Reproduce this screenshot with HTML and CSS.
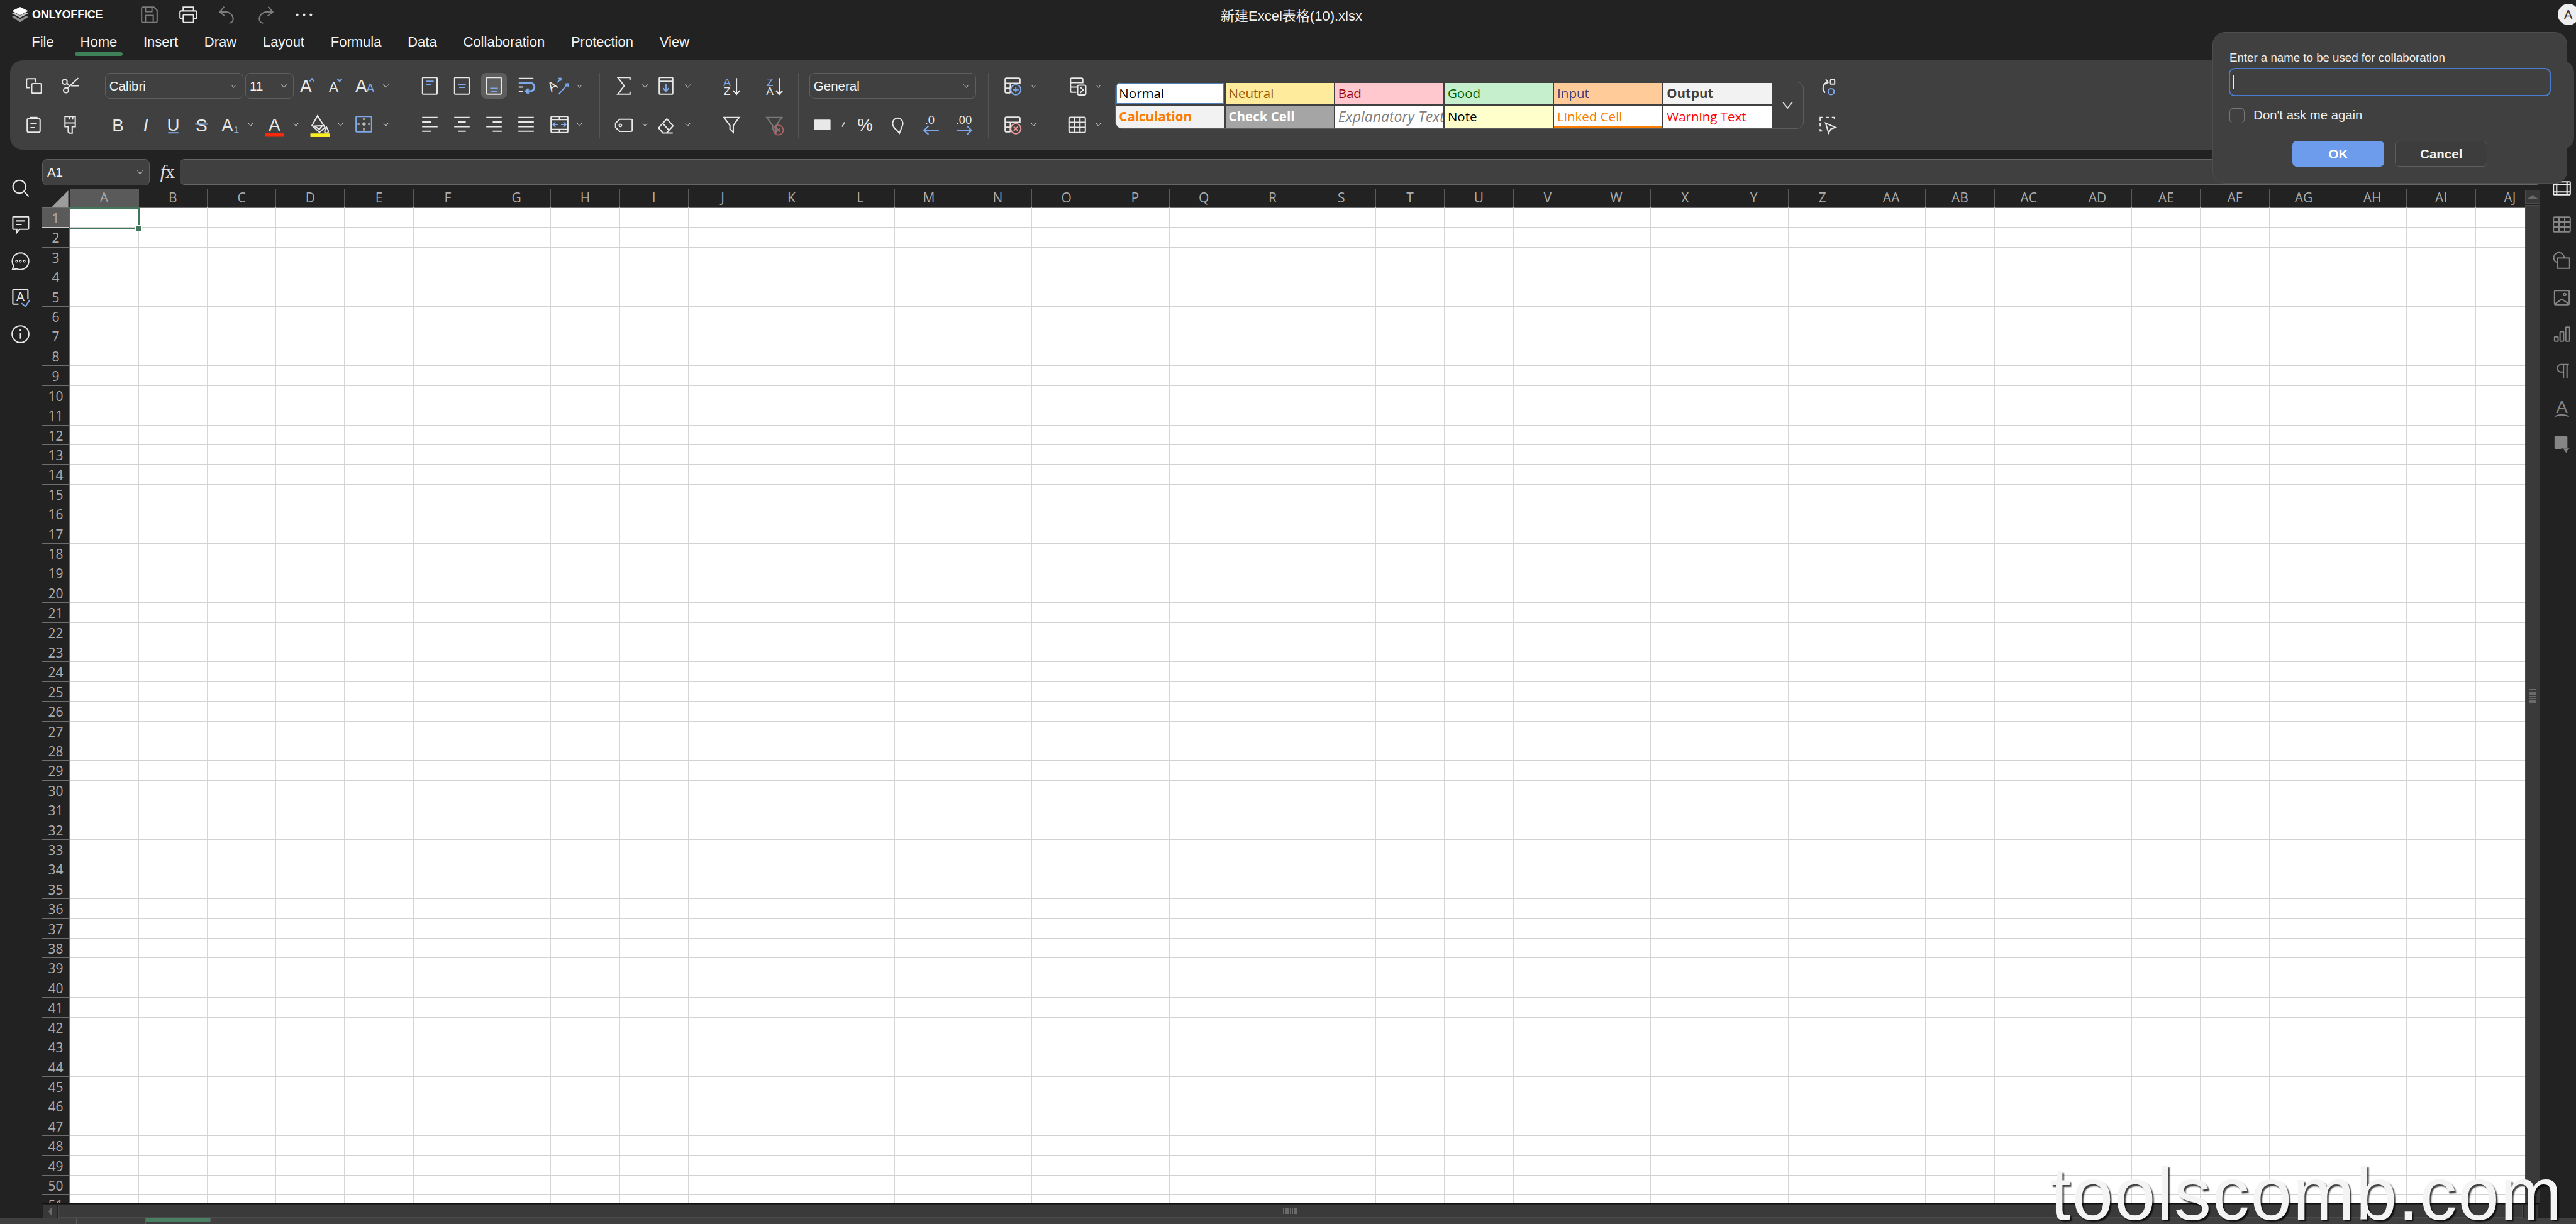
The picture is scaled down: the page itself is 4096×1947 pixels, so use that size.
FILE: index.html
```html
<!DOCTYPE html>
<html lang="en">
<head>
  <meta charset="UTF-8">
  <meta name="viewport" content="width=device-width, initial-scale=1.0">
  <title>新建Excel表格(10).xlsx</title>
  <link rel="stylesheet" href="styles.css">
</head>
<body>
  <!-- icon sprite -->
  <svg class="sprite">
    <symbol id="chev" viewBox="0 0 9 6"><path d="M.5.5L4.5 5.3 8.500.5"/></symbol>
    <symbol id="logo" viewBox="0 0 38 36">
      <path class="logo-a" d="M19 0L38 9.500 19 19 0 9.500z"/>
      <path class="logo-b" d="M0 15l5-2.300L19 20l14-7.300L38 15 19 25z"/>
      <path class="logo-c" d="M0 23l5-2.300L19 28l14-7.300L38 23 19 36z"/>
    </symbol>
    <symbol id="save" viewBox="0 0 20 20"><path d="M5 4h8.500L16 6.500V15a1 1 0 0 1-1 1H5a1 1 0 0 1-1-1V5a1 1 0 0 1 1-1zM7 4v3.500h5V4M7 16v-5.500h6V16"/></symbol>
    <symbol id="print" viewBox="0 0 20 20"><path d="M6 7V4h8v3M6 13H4.500a1 1 0 0 1-1-1V8a1 1 0 0 1 1-1h11a1 1 0 0 1 1 1v4a1 1 0 0 1-1 1H14"/><rect x="6" y="10" width="8" height="6" rx=".6"/></symbol>
    <symbol id="undo" viewBox="0 0 20 20"><path d="M8 3.700L4.500 7.800 8.500 11M4.500 7.800h5a5.800 5.800 0 0 1 5.500 5.400c0 2-1.400 3.200-3 3.300"/></symbol>
    <symbol id="redo" viewBox="0 0 20 20"><path d="M12 3.700l3.500 4.100-4 3.200M15.500 7.800h-5A5.800 5.800 0 0 0 5 13.200c0 2 1.400 3.200 3 3.300"/></symbol>
    <symbol id="dots" viewBox="0 0 20 20"><g class="solid"><circle cx="4.700" cy="10" r="1"/><circle cx="10" cy="10" r="1"/><circle cx="15.300" cy="10" r="1"/></g></symbol>

    <symbol id="copy" viewBox="0 0 20 20"><path d="M11.500 7.500V4.500H5.500a1 1 0 0 0-1 1v6H7"/><rect x="8.500" y="8.300" width="7.500" height="7.500" rx="1"/></symbol>
    <symbol id="cut" viewBox="0 0 20 20"><circle cx="5.800" cy="7" r="1.900"/><circle cx="6.800" cy="13.500" r="1.900"/><path d="M16.300 4L7.800 12M7.500 8.200l2.500 2.100M10.800 10h6"/></symbol>
    <symbol id="paste" viewBox="0 0 20 20"><rect x="5" y="5.300" width="10" height="10.500" rx="1"/><path d="M7.500 5.300V4.300h5v1M7.500 9h5M7.500 12.200h3.500"/></symbol>
    <symbol id="painter" viewBox="0 0 20 20"><path d="M6 3.500h8v8h-2.400v5H9.500l-1-1v-4H6zM6 8.500h8M9.300 3.500v2.500M12 3.500v2.500"/></symbol>
    <symbol id="fgrow" viewBox="0 0 20 20"><text class="t" x="8" y="15" font-size="14">A</text><path class="b" d="M11 6.500l1.700-2 1.700 2"/></symbol>
    <symbol id="fshrink" viewBox="0 0 20 20"><text class="t" x="8" y="14.500" font-size="11">A</text><path class="b" d="M11 4.500l1.700 2 1.700-2"/></symbol>
    <symbol id="fcase" viewBox="0 0 20 20"><text class="t" x="7.500" y="15" font-size="14">A</text><text class="t tb" x="14.500" y="15" font-size="9.500">A</text></symbol>
    <symbol id="bold" viewBox="0 0 20 20"><text class="t" x="10" y="15" font-size="13.500">B</text></symbol>
    <symbol id="italic" viewBox="0 0 20 20"><text class="t ti" x="10" y="15" font-size="13.500">I</text></symbol>
    <symbol id="under" viewBox="0 0 20 20"><text class="t" x="10" y="14.500" font-size="13.500">U</text><path class="b" d="M6 16.200h8"/></symbol>
    <symbol id="strike" viewBox="0 0 20 20"><text class="t" x="10" y="15" font-size="13.500">S</text><path class="b" d="M5 9.500h10"/></symbol>
    <symbol id="sub" viewBox="0 0 20 20"><text class="t" x="8.500" y="15" font-size="13.500">A</text><text class="t tb" x="15.500" y="16" font-size="7.500">1</text></symbol>
    <symbol id="fcolor" viewBox="0 0 20 20"><text class="t" x="10" y="14.800" font-size="13.500">A</text><rect class="bar-red" x="2.500" y="16.500" width="15" height="2.800"/></symbol>
    <symbol id="fill" viewBox="0 0 20 20"><path d="M8.200 3l5.800 9-4.300 3.800L4 10.500zM6 11l6-.3-2.500 2.800zM15.300 12c.7 1.300 1.300 2.100 1.300 3a1.400 1.400 0 0 1-2.800 0c0-.9.700-1.700 1.500-3z"/><rect class="bar-yellow" x="2.700" y="16.700" width="15" height="2.800"/></symbol>
    <symbol id="borders" viewBox="0 0 20 20"><rect class="b" x="3.500" y="3.500" width="12" height="12" rx=".8"/><path d="M9.500 4.500v1.800M9.500 8v3M9.500 12.700v1.800M4.500 9.500h1.800M8 9.500h3M12.700 9.500h1.800"/></symbol>

    <symbol id="a-top" viewBox="0 0 20 20"><rect x="4.300" y="3.500" width="11.300" height="13" rx=".8"/><path class="b" d="M7 6.500h6M7 9h4"/></symbol>
    <symbol id="a-mid" viewBox="0 0 20 20"><rect x="4.300" y="3.500" width="11.300" height="13" rx=".8"/><path class="b" d="M7 8.800h6M7.800 11.200h4.400"/></symbol>
    <symbol id="a-bot" viewBox="0 0 20 20"><rect x="4.300" y="3.500" width="11.300" height="13" rx=".8"/><path class="b" d="M7 12h6M7.800 14.400h4.400"/></symbol>
    <symbol id="wrap" viewBox="0 0 20 20"><path d="M4.300 4.300h11.400M4.300 11h3M4.300 14.500h3"/><path class="b wb" d="M4.300 7.800h9a3.200 3.200 0 0 1 0 6.400h-3M12 12.200l-2.300 2 2.300 2"/></symbol>
    <symbol id="orient" viewBox="0 0 20 20"><text class="t" transform="translate(7 13) rotate(-35)" font-size="10">A</text><path class="b" d="M9 7.500L11.500 4.200M9.700 4.300l1.800-.1.300 1.800M17 8.500L10 16.500M14.800 8.700l2.200-.2.300 2.200"/></symbol>
    <symbol id="l-left" viewBox="0 0 20 20"><path d="M4 4.300h12M4 7.800h7M4 11.400h12M4 15h7"/></symbol>
    <symbol id="l-center" viewBox="0 0 20 20"><path d="M4 4.300h12M7 7.800h6M4 11.400h12M7 15h6"/></symbol>
    <symbol id="l-right" viewBox="0 0 20 20"><path d="M4 4.300h12M9 7.800h7M4 11.400h12M9 15h7"/></symbol>
    <symbol id="l-just" viewBox="0 0 20 20"><path d="M4 4.300h12M4 7.800h12M4 11.400h12M4 15h12"/></symbol>
    <symbol id="merge" viewBox="0 0 20 20"><rect x="4" y="3.500" width="13" height="12.500" rx=".7"/><path d="M4 6h13M4 13.500h13M10.500 3.500V6M10.500 13.500V16"/><path class="b" d="M9.300 9.800H5.500M7.500 8L5.500 9.800l2 1.800M11.700 9.800h3.800M13.500 8l2 1.800-2 1.800"/></symbol>
    <symbol id="sum" viewBox="0 0 20 20"><path d="M15 5.500V3.500H5.500L10.500 10l-5 6.500H15v-2"/></symbol>
    <symbol id="filld" viewBox="0 0 20 20"><rect x="4.500" y="3.500" width="10.500" height="13" rx=".8"/><path d="M4.500 6.500H15"/><path class="b" d="M9.700 8.300v6M7.500 11.800l2.200 2.500 2.200-2.500"/></symbol>
    <symbol id="tag" viewBox="0 0 20 20"><path d="M7 5.700h9a.7.700 0 0 1 .7.700v8a.7.700 0 0 1-.7.700H7l-3.200-3v-3.400z"/><circle cx="7.500" cy="10.400" r=".9"/></symbol>
    <symbol id="eraser" viewBox="0 0 20 20"><path d="M10.400 5.400l4.800 5.400-5 5.500H7.300L4 12.400zM7.200 8.900l5 5.500M7 16.300h8"/></symbol>
    <symbol id="sortaz" viewBox="0 0 20 20"><text class="t tb" x="6.400" y="10" font-size="8.500">A</text><text class="t" x="6.400" y="17" font-size="8.500">Z</text><path d="M13.700 4v12.500M11.200 13.800l2.500 2.800 2.500-2.800"/></symbol>
    <symbol id="sortza" viewBox="0 0 20 20"><text class="t tb" x="6.400" y="10" font-size="8.500">Z</text><text class="t" x="6.400" y="17" font-size="8.500">A</text><path d="M13.700 4v12.500M11.200 13.800l2.500 2.800 2.500-2.800"/></symbol>
    <symbol id="filter" viewBox="0 0 20 20"><path d="M4 4.300h11.700l-4.500 6.200v5.300l-2.600-2.600v-2.700z"/></symbol>
    <symbol id="filterx" viewBox="0 0 20 20"><path class="dim" d="M4 4.300h11.700l-4.500 6.200v5.300l-2.600-2.600v-2.700z"/><circle class="pink" cx="13" cy="14" r="3.800"/><path class="pink" d="M11.700 12.600l2.600 2.800M14.300 12.600l-2.600 2.800"/></symbol>
    <symbol id="money" viewBox="0 0 20 20"><rect class="solid" x="3.700" y="6" width="12.700" height="8" rx=".6"/></symbol>
    <symbol id="percent" viewBox="0 0 20 20"><text class="t" x="10" y="14.700" font-size="13.500">%</text></symbol>
    <symbol id="comma" viewBox="0 0 20 20"><path d="M10.800 16.500l2-5c.4-.9.700-1.700.7-2.700a4 4 0 0 0-8 0c0 2.300 1.700 4.200 3.200 5.300z"/></symbol>
    <symbol id="decdn" viewBox="0 0 20 20"><text class="t" x="9" y="9.500" font-size="9">.0</text><path class="b" d="M16 14.300H4.500M8 11L4.500 14.300l3.500 3.200"/></symbol>
    <symbol id="decup" viewBox="0 0 20 20"><text class="t" x="9.500" y="9.500" font-size="9">.00</text><path class="b" d="M4 14.300h11.500M12 11l3.500 3.300-3.500 3.200"/></symbol>
    <symbol id="celladd" viewBox="0 0 20 20"><path d="M8.500 15.500h-3a1 1 0 0 1-1-1V5a1 1 0 0 1 1-1h9.500a1 1 0 0 1 1 1v3M4.500 8h12M4.500 11.800h4M8.500 8v7.500"/><circle class="b" cx="12.800" cy="13" r="3.900"/><path class="b" d="M12.800 10.800v4.400M10.600 13H15"/></symbol>
    <symbol id="celldel" viewBox="0 0 20 20"><path d="M8.500 15.500h-3a1 1 0 0 1-1-1V5a1 1 0 0 1 1-1h9.500a1 1 0 0 1 1 1v3M4.500 8h12M4.500 11.800h4M8.500 8v7.500"/><circle class="pink2" cx="12.800" cy="13" r="3.900"/><path class="pink2" d="M11.200 11.400l3.200 3.200M14.400 11.400l-3.200 3.200"/></symbol>
    <symbol id="cond" viewBox="0 0 20 20"><path d="M14.500 8V5a1 1 0 0 0-1-1H6a1 1 0 0 0-1 1v9a1 1 0 0 0 1 1h3.500M5 7.500h9.500M5 11h5"/><rect x="10.500" y="9.500" width="6.300" height="7.500" rx="1"/><path d="M12.500 11l2.300 2.200-2.300 2.300"/></symbol>
    <symbol id="ftable" viewBox="0 0 20 20"><rect x="3.800" y="4.200" width="12.700" height="11.800" rx="1"/><path d="M3.800 8h12.700M3.800 12h12.700M8 4.200V16M12.300 4.200V16"/></symbol>
    <symbol id="stylecopy" viewBox="0 0 20 20"><rect x="12.500" y="5.300" width="3.200" height="3.400" rx=".4"/><circle class="b" cx="13" cy="14.500" r="2.300"/><path d="M9.500 7.300a5 5 0 0 0-2.800 4.700c0 1.400.7 2.500 1.700 3.300M8.700 5l2 2.200-2.400 1.500"/></symbol>
    <symbol id="selcur" viewBox="0 0 20 20"><path d="M4.500 6.800V4.300h2.300M9 4.300h2.500M13.500 4.300h2v1.500M4.500 8.800v2.500M4.500 13.300v1.500h1.500"/><path d="M8.700 8.700l7.600 3.300-3.500 1.200-1.800 3.100z"/></symbol>

    <symbol id="search" viewBox="0 0 20 20"><circle cx="9.200" cy="9.300" r="5"/><path d="M12.800 13l3.600 3.800"/></symbol>
    <symbol id="comment" viewBox="0 0 20 20"><path d="M4.700 4.200h11a.6.6 0 0 1 .6.6v8.600a.6.6 0 0 1-.6.6H9.500l-2.300 2.500V14H4.700a.6.6 0 0 1-.6-.6V4.800a.6.6 0 0 1 .6-.6zM6.500 7.500h7M6.500 10.200h4.500"/></symbol>
    <symbol id="chat" viewBox="0 0 20 20"><path d="M10 3.500a6.500 6.500 0 1 1-2.800 12.400l-3.400.6.900-3A6.500 6.500 0 0 1 10 3.500z"/><circle class="thin" cx="7" cy="10" r=".7"/><circle class="thin" cx="10" cy="10" r=".7"/><circle class="thin" cx="13" cy="10" r=".7"/></symbol>
    <symbol id="spell" viewBox="0 0 20 20"><path d="M8.500 15H4.700a.6.600 0 0 1-.6-.6V4.300a.6.600 0 0 1 .6-.6h10.500a.6.600 0 0 1 .6.6V11"/><text class="t" x="10" y="12.700" font-size="9.500">A</text><path class="b" d="M10.800 14.300l3 2.500 3.500-5"/></symbol>
    <symbol id="info" viewBox="0 0 20 20"><circle cx="10" cy="10" r="6.500"/><path d="M10 9v4.500"/><circle class="solid" cx="10" cy="6.900" r=".7"/></symbol>

    <symbol id="r-cell" viewBox="0 0 20 20"><rect x="3.500" y="5.500" width="13" height="10" rx=".6"/><path d="M3.500 7.500h13M3.500 13.300h13M6 5.500v10M14 5.500v10"/></symbol>
    <symbol id="r-table" viewBox="0 0 20 20"><rect x="3.500" y="4.500" width="13" height="11.500" rx="1"/><path d="M3.500 8.300h13M3.500 12.200h13M7.800 4.500V16M12.200 4.500V16"/></symbol>
    <symbol id="r-shape" viewBox="0 0 20 20"><path d="M6.800 11.200A4 4 0 1 1 11.700 7.500"/><rect x="6.800" y="7.500" width="9.200" height="8"/></symbol>
    <symbol id="r-image" viewBox="0 0 20 20"><rect x="4.300" y="4.500" width="11.400" height="11" rx=".7"/><path d="M4.500 15l5.500-4 5.500 4"/><ellipse cx="12.200" cy="7.500" rx="1" ry=".8"/></symbol>
    <symbol id="r-chart" viewBox="0 0 20 20"><rect x="4.300" y="12" width="2.800" height="3.500" rx=".5"/><rect x="8.600" y="8" width="2.800" height="7.500" rx=".5"/><rect x="13" y="4.500" width="3" height="11" rx=".5"/></symbol>
    <symbol id="r-para" viewBox="0 0 20 20"><path d="M15.500 4.800H9.300a2.900 2.900 0 0 0 0 5.800h2M11.300 4.800V15.500M14 4.800V15.500"/></symbol>
    <symbol id="r-art" viewBox="0 0 20 20"><text class="t grey" x="10" y="14" font-size="13.500">A</text><path d="M4.500 16.800q5.500-2.600 11 0"/></symbol>
    <symbol id="r-pivot" viewBox="0 0 20 20"><rect class="solid grey" x="4.300" y="3" width="10" height="10.500" rx="1"/><path class="solid grey pv" d="M9.500 12.500h7.200l-2.600 2.400v1.900l-1.800-1.200v-.7z"/></symbol>
  </svg>

  <div class="app">
    <header class="titlebar">
      <div class="title-left">
        <div class="logo">
          <svg class="logo-mark"><use href="#logo"/></svg>
          <span class="logo-text">ONLYOFFICE</span>
        </div>
        <div class="quick">
          <svg class="ico off"><use href="#save"/></svg>
          <svg class="ico"><use href="#print"/></svg>
          <svg class="ico off"><use href="#undo"/></svg>
          <svg class="ico off"><use href="#redo"/></svg>
          <svg class="ico"><use href="#dots"/></svg>
        </div>
      </div>
      <div class="doc-title">新建Excel表格(10).xlsx</div>
      <div class="avatar">A</div>
    </header>

    <nav class="tabs">
      <span class="tab">File</span>
      <span class="tab active">Home</span>
      <span class="tab">Insert</span>
      <span class="tab">Draw</span>
      <span class="tab">Layout</span>
      <span class="tab">Formula</span>
      <span class="tab">Data</span>
      <span class="tab">Collaboration</span>
      <span class="tab">Protection</span>
      <span class="tab">View</span>
    </nav>

    <section class="toolbar">
      <div class="group g-clip">
        <div class="row">
          <svg class="ico"><use href="#copy"/></svg>
          <svg class="ico"><use href="#cut"/></svg>
        </div>
        <div class="row">
          <svg class="ico"><use href="#paste"/></svg>
          <svg class="ico"><use href="#painter"/></svg>
        </div>
      </div>
      <i class="sep"></i>
      <div class="group g-font">
        <div class="row">
          <div class="combo font-name"><span>Calibri</span><svg class="chev"><use href="#chev"/></svg></div>
          <div class="combo font-size"><span>11</span><svg class="chev"><use href="#chev"/></svg></div>
          <svg class="ico"><use href="#fgrow"/></svg>
          <svg class="ico"><use href="#fshrink"/></svg>
          <span class="split"><svg class="ico"><use href="#fcase"/></svg><svg class="chev"><use href="#chev"/></svg></span>
        </div>
        <div class="row">
          <svg class="ico"><use href="#bold"/></svg>
          <svg class="ico"><use href="#italic"/></svg>
          <svg class="ico"><use href="#under"/></svg>
          <svg class="ico"><use href="#strike"/></svg>
          <span class="split"><svg class="ico"><use href="#sub"/></svg><svg class="chev"><use href="#chev"/></svg></span>
          <span class="split"><svg class="ico"><use href="#fcolor"/></svg><svg class="chev"><use href="#chev"/></svg></span>
          <span class="split"><svg class="ico"><use href="#fill"/></svg><svg class="chev"><use href="#chev"/></svg></span>
          <span class="split"><svg class="ico"><use href="#borders"/></svg><svg class="chev"><use href="#chev"/></svg></span>
        </div>
      </div>
      <i class="sep"></i>
      <div class="group g-align">
        <div class="row">
          <svg class="ico"><use href="#a-top"/></svg>
          <svg class="ico"><use href="#a-mid"/></svg>
          <svg class="ico on"><use href="#a-bot"/></svg>
          <svg class="ico"><use href="#wrap"/></svg>
          <span class="split"><svg class="ico"><use href="#orient"/></svg><svg class="chev"><use href="#chev"/></svg></span>
        </div>
        <div class="row">
          <svg class="ico"><use href="#l-left"/></svg>
          <svg class="ico"><use href="#l-center"/></svg>
          <svg class="ico"><use href="#l-right"/></svg>
          <svg class="ico"><use href="#l-just"/></svg>
          <span class="split"><svg class="ico"><use href="#merge"/></svg><svg class="chev"><use href="#chev"/></svg></span>
        </div>
      </div>
      <i class="sep"></i>
      <div class="group g-func">
        <div class="row">
          <span class="split"><svg class="ico"><use href="#sum"/></svg><svg class="chev"><use href="#chev"/></svg></span>
          <span class="split"><svg class="ico"><use href="#filld"/></svg><svg class="chev"><use href="#chev"/></svg></span>
        </div>
        <div class="row">
          <span class="split"><svg class="ico"><use href="#tag"/></svg><svg class="chev"><use href="#chev"/></svg></span>
          <span class="split"><svg class="ico"><use href="#eraser"/></svg><svg class="chev"><use href="#chev"/></svg></span>
        </div>
      </div>
      <i class="sep"></i>
      <div class="group g-sort">
        <div class="row">
          <svg class="ico"><use href="#sortaz"/></svg>
          <svg class="ico"><use href="#sortza"/></svg>
        </div>
        <div class="row">
          <svg class="ico"><use href="#filter"/></svg>
          <svg class="ico"><use href="#filterx"/></svg>
        </div>
      </div>
      <i class="sep"></i>
      <div class="group g-num">
        <div class="row">
          <div class="combo num-format"><span>General</span><svg class="chev"><use href="#chev"/></svg></div>
        </div>
        <div class="row">
          <span class="split"><svg class="ico"><use href="#money"/></svg><i class="tick"></i></span>
          <svg class="ico"><use href="#percent"/></svg>
          <svg class="ico"><use href="#comma"/></svg>
          <svg class="ico"><use href="#decdn"/></svg>
          <svg class="ico"><use href="#decup"/></svg>
        </div>
      </div>
      <i class="sep"></i>
      <div class="group">
        <div class="row"><span class="split"><svg class="ico"><use href="#celladd"/></svg><svg class="chev"><use href="#chev"/></svg></span></div>
        <div class="row"><span class="split"><svg class="ico"><use href="#celldel"/></svg><svg class="chev"><use href="#chev"/></svg></span></div>
      </div>
      <i class="sep"></i>
      <div class="group">
        <div class="row"><span class="split"><svg class="ico"><use href="#cond"/></svg><svg class="chev"><use href="#chev"/></svg></span></div>
        <div class="row"><span class="split"><svg class="ico"><use href="#ftable"/></svg><svg class="chev"><use href="#chev"/></svg></span></div>
      </div>

      <div class="gallery">
        <div class="styles">
          <div class="style s-normal">Normal</div>
          <div class="style s-neutral">Neutral</div>
          <div class="style s-bad">Bad</div>
          <div class="style s-good">Good</div>
          <div class="style s-input">Input</div>
          <div class="style s-output">Output</div>
          <div class="style s-calc">Calculation</div>
          <div class="style s-check">Check Cell</div>
          <div class="style s-expl">Explanatory Text</div>
          <div class="style s-note">Note</div>
          <div class="style s-linked">Linked Cell</div>
          <div class="style s-warn">Warning Text</div>
        </div>
        <div class="gallery-more"><svg class="chev-big"><use href="#chev"/></svg></div>
      </div>

      <div class="group g-extra">
        <div class="row"><svg class="ico"><use href="#stylecopy"/></svg></div>
        <div class="row"><svg class="ico"><use href="#selcur"/></svg></div>
      </div>
    </section>

    <main class="workspace">
      <aside class="rail rail-left">
        <svg class="ico"><use href="#search"/></svg>
        <svg class="ico"><use href="#comment"/></svg>
        <svg class="ico"><use href="#chat"/></svg>
        <svg class="ico"><use href="#spell"/></svg>
        <svg class="ico"><use href="#info"/></svg>
      </aside>

      <div class="center">
        <div class="formula">
          <div class="combo name-box"><span>A1</span><svg class="chev"><use href="#chev"/></svg></div>
          <span class="fx"><i>f</i>x</span>
          <div class="formula-input"></div>
        </div>

        <div class="sheet-wrap">
          <div class="sheet">
            <div class="rows">
              <div class="heads"><div class="corner"><div class="tri"></div></div></div>
              <div class="rw sel"><b>1</b></div>
              <div class="rw"><b>2</b></div>
              <div class="rw"><b>3</b></div>
              <div class="rw"><b>4</b></div>
              <div class="rw"><b>5</b></div>
              <div class="rw"><b>6</b></div>
              <div class="rw"><b>7</b></div>
              <div class="rw"><b>8</b></div>
              <div class="rw"><b>9</b></div>
              <div class="rw"><b>10</b></div>
              <div class="rw"><b>11</b></div>
              <div class="rw"><b>12</b></div>
              <div class="rw"><b>13</b></div>
              <div class="rw"><b>14</b></div>
              <div class="rw"><b>15</b></div>
              <div class="rw"><b>16</b></div>
              <div class="rw"><b>17</b></div>
              <div class="rw"><b>18</b></div>
              <div class="rw"><b>19</b></div>
              <div class="rw"><b>20</b></div>
              <div class="rw"><b>21</b></div>
              <div class="rw"><b>22</b></div>
              <div class="rw"><b>23</b></div>
              <div class="rw"><b>24</b></div>
              <div class="rw"><b>25</b></div>
              <div class="rw"><b>26</b></div>
              <div class="rw"><b>27</b></div>
              <div class="rw"><b>28</b></div>
              <div class="rw"><b>29</b></div>
              <div class="rw"><b>30</b></div>
              <div class="rw"><b>31</b></div>
              <div class="rw"><b>32</b></div>
              <div class="rw"><b>33</b></div>
              <div class="rw"><b>34</b></div>
              <div class="rw"><b>35</b></div>
              <div class="rw"><b>36</b></div>
              <div class="rw"><b>37</b></div>
              <div class="rw"><b>38</b></div>
              <div class="rw"><b>39</b></div>
              <div class="rw"><b>40</b></div>
              <div class="rw"><b>41</b></div>
              <div class="rw"><b>42</b></div>
              <div class="rw"><b>43</b></div>
              <div class="rw"><b>44</b></div>
              <div class="rw"><b>45</b></div>
              <div class="rw"><b>46</b></div>
              <div class="rw"><b>47</b></div>
              <div class="rw"><b>48</b></div>
              <div class="rw"><b>49</b></div>
              <div class="rw"><b>50</b></div>
              <div class="rw"><b>51</b></div>
            </div>
            <div class="cols">
              <div class="col"><b class="sel">A</b></div>
              <div class="col"><b>B</b></div>
              <div class="col"><b>C</b></div>
              <div class="col"><b>D</b></div>
              <div class="col"><b>E</b></div>
              <div class="col"><b>F</b></div>
              <div class="col"><b>G</b></div>
              <div class="col"><b>H</b></div>
              <div class="col"><b>I</b></div>
              <div class="col"><b>J</b></div>
              <div class="col"><b>K</b></div>
              <div class="col"><b>L</b></div>
              <div class="col"><b>M</b></div>
              <div class="col"><b>N</b></div>
              <div class="col"><b>O</b></div>
              <div class="col"><b>P</b></div>
              <div class="col"><b>Q</b></div>
              <div class="col"><b>R</b></div>
              <div class="col"><b>S</b></div>
              <div class="col"><b>T</b></div>
              <div class="col"><b>U</b></div>
              <div class="col"><b>V</b></div>
              <div class="col"><b>W</b></div>
              <div class="col"><b>X</b></div>
              <div class="col"><b>Y</b></div>
              <div class="col"><b>Z</b></div>
              <div class="col"><b>AA</b></div>
              <div class="col"><b>AB</b></div>
              <div class="col"><b>AC</b></div>
              <div class="col"><b>AD</b></div>
              <div class="col"><b>AE</b></div>
              <div class="col"><b>AF</b></div>
              <div class="col"><b>AG</b></div>
              <div class="col"><b>AH</b></div>
              <div class="col"><b>AI</b></div>
              <div class="col"><b>AJ</b></div>
            </div>
            <div class="cursor"></div>
          </div>

          <div class="vscroll">
            <div class="sb-btn"><i class="arrow up"></i></div>
            <div class="sb-track"><div class="grip"><i></i><i></i><i></i><i></i><i></i><i></i><i></i></div></div>
            <div class="sb-btn"><i class="arrow down"></i></div>
          </div>

          <div class="hscroll">
            <div class="sb-btn"><i class="arrow left"></i></div>
            <div class="sb-track"><div class="grip"><i></i><i></i><i></i><i></i><i></i><i></i><i></i></div></div>
            <div class="sb-btn"><i class="arrow right"></i></div>
          </div>
        </div>
      </div>

      <aside class="rail rail-right">
        <svg class="ico lit"><use href="#r-cell"/></svg>
        <svg class="ico"><use href="#r-table"/></svg>
        <svg class="ico"><use href="#r-shape"/></svg>
        <svg class="ico"><use href="#r-image"/></svg>
        <svg class="ico"><use href="#r-chart"/></svg>
        <svg class="ico"><use href="#r-para"/></svg>
        <svg class="ico"><use href="#r-art"/></svg>
        <svg class="ico"><use href="#r-pivot"/></svg>
      </aside>
    </main>

    <footer class="statusbar">
      <div class="status-left"></div>
      <div class="status-gap"></div>
      <div class="sheet-tab"></div>
    </footer>

    <!-- name prompt over the editor -->
    <div class="dialog">
      <div class="dialog-label">Enter a name to be used for collaboration</div>
      <div class="dialog-input"><i class="caret"></i></div>
      <label class="dialog-check"><span class="box"></span>Don't ask me again</label>
      <div class="dialog-actions">
        <button class="btn primary">OK</button>
        <button class="btn">Cancel</button>
      </div>
    </div>

    <div class="watermark">toolscomb.com</div>
  </div>
</body>
</html>
```

FILE: styles.css
```css
* {
  box-sizing: border-box;
}

body {
  margin: 0;
  background: #222;
  color: #f0f0f0;
  font-family: "Liberation Sans", Arial, sans-serif;
  overflow: hidden;
}

.sprite {
  display: none;
}

.app {
  position: relative;
  display: flex;
  flex-direction: column;
  width: 4096px;
  height: 1947px;
  overflow: hidden;
  background: #222;
}

/* icons: 20 unit box in a 41px slot */
.ico {
  flex: none;
  width: 41px;
  height: 41px;
  fill: none;
  stroke: #e8e8e8;
  stroke-width: 1;
  color: #e8e8e8;
}

.ico.off {
  stroke: #7d7d7d;
}

.ico.on {
  background: #5e5e5e;
  border-radius: 8px;
}

.t {
  fill: #e8e8e8;
  stroke: none;
  font-family: "Liberation Sans", Arial, sans-serif;
  text-anchor: middle;
}

.t.tb {
  fill: #7ea8ec;
}

.t.ti {
  font-style: italic;
}

.b {
  stroke: #7ea8ec;
}

.wb {
  stroke-width: 1.5;
}

.thin {
  stroke-width: .6;
}

.dim {
  stroke: #7a7a7a;
}

.pink {
  stroke: #a85f62;
}

.pink2 {
  stroke: #ef9a9a;
}

.solid {
  fill: #e8e8e8;
  stroke: none;
}

.t.grey,
.solid.grey {
  fill: #858585;
}

.pv {
  stroke: #222;
  stroke-width: .6;
}

.bar-red {
  fill: #f5290c;
  stroke: none;
}

.bar-yellow {
  fill: #fbee23;
  stroke: none;
}

.chev,
.chev-big {
  flex: none;
  width: 9px;
  height: 6px;
  fill: none;
  stroke: #ddd;
  stroke-width: 1;
}

.chev-big {
  width: 19px;
  height: 11px;
}

.split {
  display: flex;
  flex: none;
  align-items: center;
  width: 68.3px;
}

.split .chev {
  margin-left: 8.8px;
}

.tick {
  width: 2px;
  height: 8px;
  margin-left: 12px;
  background: #ccc;
  transform: rotate(30deg);
}

/* title bar */
.titlebar {
  display: grid;
  flex: none;
  grid-template-columns: 1fr auto 1fr;
  align-items: center;
  height: 46.4px;
  padding: 0 8px 0 19px;
}

.title-left {
  display: flex;
  align-items: center;
}

.logo {
  display: flex;
  align-items: center;
  width: 146px;
}

.logo-mark {
  flex: none;
  width: 26px;
  height: 24.6px;
}

.logo-a {
  fill: #fff;
}

.logo-b {
  fill: #c4c4c4;
}

.logo-c {
  fill: #8e8e8e;
}

.logo-text {
  margin-left: 6px;
  font-size: 18px;
  font-weight: 700;
  letter-spacing: -.2px;
  color: #fff;
}

.quick {
  display: flex;
  gap: 20.5px;
  margin-left: 52px;
}

.doc-title {
  font-family: "Liberation Sans", "Noto Sans CJK SC", sans-serif;
  font-size: 22px;
  color: #eee;
}

.avatar {
  justify-self: end;
  width: 34px;
  height: 34px;
  margin-right: -12.7px;
  border-radius: 50%;
  background: #eee;
  color: #333;
  font-size: 20px;
  line-height: 34px;
  text-align: center;
}

/* tabs */
.tabs {
  display: flex;
  flex: none;
  height: 49.2px;
  padding-left: 29.4px;
}

.tab {
  display: flex;
  flex-direction: column;
  padding: 5.3px 20.9px 0;
  font-size: 22px;
  line-height: 29px;
  color: #f2f2f2;
}

.tab.active::after {
  content: "";
  height: 5.5px;
  margin: 2.6px -9px 0;
  border-radius: 3px;
  background: #3e8058;
}

/* ribbon */
.toolbar {
  display: flex;
  flex: none;
  height: 142.7px;
  margin: 0 2.7px 0 15.7px;
  padding: 20.5px 0 0 17px;
  border-radius: 20px;
  background: #404040;
}

.group {
  display: flex;
  flex: none;
  flex-direction: column;
  gap: 20.5px;
}

.row {
  display: flex;
  align-items: center;
  height: 41px;
  gap: 3.4px;
}

.sep {
  flex: none;
  width: 1px;
  height: 102.5px;
  margin: 0 17px;
  background: #555;
}

.g-clip .row {
  gap: 17px;
}

.g-align .row {
  gap: 10.25px;
}

.g-func .row {
  gap: 0;
}

.g-sort .row {
  gap: 27.3px;
}

.g-num .row {
  gap: 11.6px;
}

.g-num .split {
  margin-right: -11.6px;
}

.g-extra {
  margin-left: 17px;
}

.combo {
  display: flex;
  flex: none;
  align-items: center;
  justify-content: space-between;
  height: 41px;
  padding: 0 10px 0 6px;
  border: 1px solid #5e5e5e;
  border-radius: 8px;
  background: #404040;
  font-size: 20.5px;
  color: #f4f4f4;
}

.font-name {
  width: 220px;
}

.font-size {
  width: 76.5px;
}

.num-format {
  width: 265px;
}

.gallery {
  display: flex;
  flex: none;
  width: 1095px;
  height: 75.8px;
  margin: 13.5px 0 0 12.9px;
  border: 1px solid #5c5c5c;
  border-radius: 11px;
  overflow: hidden;
}

.styles {
  display: grid;
  flex: none;
  grid-template-columns: repeat(6, 172px);
  grid-template-rows: 1fr 1fr;
  gap: 2.4px 2.2px;
  width: 1043px;
  padding: 1.5px 0;
}

.style {
  padding-left: 5px;
  font-family: "Open Sans", "Liberation Sans", sans-serif;
  font-size: 20.5px;
  line-height: 33px;
  white-space: nowrap;
  overflow: hidden;
}

.s-normal { background: #fff; color: #000; box-shadow: inset 0 0 0 2px #4f7db8; }
.s-neutral { background: #ffeb9c; color: #9c5700; }
.s-bad { background: #ffc7ce; color: #9c0006; }
.s-good { background: #c6efce; color: #006100; }
.s-input { background: #ffcc99; color: #3f3f76; }
.s-output { background: #f2f2f2; color: #3f3f3f; font-weight: 700; }
.s-calc { background: #f2f2f2; color: #fa7d00; font-weight: 700; }
.s-check { background: #a5a5a5; color: #fff; font-weight: 700; }
.s-expl { background: #fff; color: #7f7f7f; font-style: italic; font-size: 23px; }
.s-note { background: #ffffcc; color: #000; }
.s-linked { background: #fff; color: #fa7d00; border-bottom: 2px solid #fa7d00; }
.s-warn { background: #fff; color: #ff0000; }

.gallery-more {
  display: flex;
  flex: 1;
  align-items: center;
  justify-content: center;
  border-left: 1px solid #5c5c5c;
}

/* main area */
.workspace {
  display: flex;
  flex: 1;
  min-height: 0;
}

.rail {
  display: flex;
  flex: none;
  flex-direction: column;
  gap: 17.4px;
  padding-top: 39.6px;
}

.rail-left {
  width: 66.9px;
  padding-left: 12.3px;
}

.rail-right {
  width: 57.4px;
  padding-left: 14.3px;
}

.rail-right .ico {
  stroke: #858585;
  color: #858585;
}

.rail-right .ico.lit {
  stroke: #eee;
}

.center {
  display: flex;
  flex: 1;
  flex-direction: column;
  min-width: 0;
  padding-top: 14.3px;
}

.formula {
  display: flex;
  flex: none;
  align-items: flex-start;
  height: 42.3px;
  margin: 0 -2px 5.5px 0;
}

.name-box {
  width: 170.8px;
  height: 42.3px;
  padding-left: 7px;
}

.fx {
  flex: none;
  width: 22px;
  margin: 2px 9px 0 17px;
  font-family: "Liberation Serif", serif;
  font-size: 30px;
  line-height: 36px;
  color: #ddd;
}

.formula-input {
  flex: 1;
  height: 41px;
  border: 1px solid #666;
  border-width: 1px 0;
  border-radius: 8px;
  background: #404040;
}

.sheet-wrap {
  display: grid;
  flex: 1;
  grid-template-columns: 1fr 23.2px;
  grid-template-rows: 1fr 23.9px;
  min-height: 0;
}

.sheet {
  position: relative;
  display: grid;
  min-width: 0;
  min-height: 0;
  overflow: hidden;
  background: #fff;
}

.rows,
.cols {
  grid-area: 1 / 1;
  min-width: 0;
}

.heads {
  height: 30.7px;
  background: #222;
  border-bottom: 1px solid #6e6e6e;
}

.corner {
  width: 44.4px;
  padding: 2.7px 0 0 15.7px;
}

.tri {
  width: 26px;
  height: 26px;
  background: #9c9c9c;
  clip-path: polygon(100% 0, 100% 100%, 0 100%);
}

.rw {
  height: 31.42px;
  border-bottom: 1px solid #d2d2d2;
}

.rw b {
  display: block;
  width: 44.4px;
  height: 31.42px;
  margin-bottom: -1px;
  border-right: 1px solid #6e6e6e;
  border-bottom: 1px solid #6e6e6e;
  background: #222;
  color: #ababab;
  font-family: "Open Sans", sans-serif;
  font-size: 21px;
  font-weight: 400;
  line-height: 32px;
  text-align: center;
}

.rw.sel b {
  background: #5a5a5a;
  border-bottom-color: #ccc;
}

.cols {
  display: flex;
  margin-left: 44.4px;
}

.col {
  flex: none;
  width: 109.31px;
  border-right: 1px solid #d6d6d6;
}

.col b {
  display: block;
  height: 29.7px;
  margin-right: -1px;
  border-right: 1px solid #5a5a5a;
  color: #ababab;
  font-family: "Open Sans", sans-serif;
  font-size: 21px;
  font-weight: 400;
  line-height: 29px;
  text-align: center;
}

.col b.sel {
  background: #5a5a5a;
}

.cursor {
  position: absolute;
  left: 42.3px;
  top: 29.4px;
  width: 112.7px;
  height: 34.8px;
  border: 2.7px solid #41775a;
}

.cursor::after {
  content: "";
  position: absolute;
  right: -4.5px;
  bottom: -4.5px;
  width: 8px;
  height: 8px;
  background: #41775a;
  box-shadow: 0 0 0 1px #fff;
}

/* scrollbars */
.vscroll {
  display: flex;
  flex-direction: column;
  gap: 1.4px;
  padding-top: 1.4px;
}

.hscroll {
  display: flex;
  grid-column: 1 / 3;
  gap: 2px;
  padding: 1px 3px 0 1.4px;
  border-top: 1px solid #111;
}

.sb-btn {
  display: flex;
  flex: none;
  align-items: center;
  justify-content: center;
  width: 22.5px;
  height: 22.5px;
  border: 1px solid #4c4c4c;
  background: #383838;
}

.vscroll .sb-btn {
  width: 100%;
}

.sb-track {
  display: flex;
  flex: 1;
  align-items: center;
  justify-content: center;
  border: 1px solid #4a4a4a;
  background: #3a3a3a;
}

.grip {
  display: flex;
  flex-direction: column;
  gap: 1.5px;
  width: 10px;
}

.grip i {
  height: 2px;
  background: #6a6a6a;
}

.hscroll .grip {
  flex-direction: row;
  width: auto;
  height: 10px;
}

.hscroll .grip i {
  width: 2px;
  height: 10px;
}

.arrow {
  width: 0;
  height: 0;
  border: 5px solid transparent;
}

.arrow.up {
  border-bottom: 6px solid #6a6a6a;
  border-top: 0;
  border-left-width: 8px;
  border-right-width: 8px;
}

.arrow.down {
  border-top: 6px solid #6a6a6a;
  border-bottom: 0;
  border-left-width: 8px;
  border-right-width: 8px;
}

.arrow.left {
  border-right: 6px solid #6a6a6a;
  border-left: 0;
  border-top-width: 8px;
  border-bottom-width: 8px;
}

.arrow.right {
  border-left: 6px solid #6a6a6a;
  border-right: 0;
  border-top-width: 8px;
  border-bottom-width: 8px;
}

/* status bar */
.statusbar {
  display: flex;
  flex: none;
  height: 9.6px;
  background: #404040;
}

.status-left {
  width: 121.6px;
  border-right: 1px solid #5c5c5c;
}

.status-gap {
  width: 110px;
  border-right: 1px solid #5c5c5c;
}

.sheet-tab {
  width: 103px;
  height: 7px;
  background: #4a7f63;
  border-right: 1px solid #5c5c5c;
}

/* dialog */
.dialog {
  position: absolute;
  left: 3518.1px;
  top: 51.2px;
  width: 563.5px;
  height: 240.4px;
  padding: 29.3px 24.6px 0;
  border: 1px solid #4d4d4d;
  border-radius: 20px;
  background: #404040;
}

.dialog-label {
  margin-left: 1.3px;
  font-size: 18.7px;
  line-height: 22px;
  color: #eee;
}

.dialog-input {
  display: flex;
  align-items: center;
  height: 44.4px;
  margin-top: 4.7px;
  padding-left: 5.5px;
  border: 2.5px solid #4a7dd1;
  border-radius: 9px;
}

.caret {
  width: 1px;
  height: 22.5px;
  background: #eee;
}

.dialog-check {
  display: flex;
  align-items: center;
  gap: 14.3px;
  height: 24px;
  margin: 19.1px 0 0 1.3px;
  font-size: 20.3px;
  color: #eee;
}

.box {
  width: 24px;
  height: 24px;
  border: 1px solid #787878;
  border-radius: 5.5px;
}

.dialog-actions {
  display: flex;
  justify-content: center;
  gap: 17px;
  margin-top: 28.7px;
}

.btn {
  width: 146.8px;
  height: 41px;
  border: 1px solid #5e5e5e;
  border-radius: 7px;
  background: #3d3d3d;
  color: #f2f2f2;
  font-family: inherit;
  font-size: 20.5px;
  font-weight: 700;
}

.btn.primary {
  border: 0;
  background: #6c9ceb;
  color: #fff;
}

.watermark {
  position: absolute;
  left: 3260px;
  bottom: 0;
  font-size: 118px;
  line-height: 96.4px;
  letter-spacing: 1.7px;
  color: #f4f4f4;
  text-shadow: 2.5px 2.5px 2px rgba(0, 0, 0, .75);
  white-space: nowrap;
}
```
